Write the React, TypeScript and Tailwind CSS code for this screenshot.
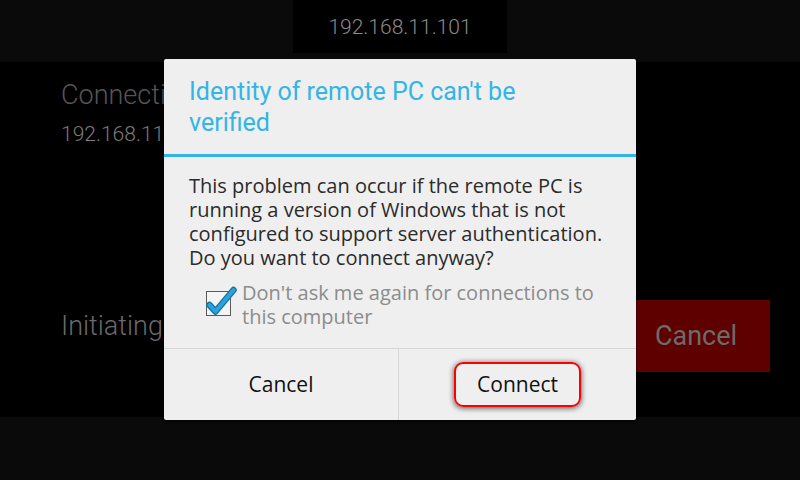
import React from 'react';

const CheckMark: React.FC = () => (
  <svg width="32" height="34" viewBox="0 0 32 34" className="absolute left-[-1px] top-[-8px]">
    <rect x="1.5" y="8.5" width="24" height="24" fill="#f4f4f4" stroke="#5a5a5a" strokeWidth="1" />
    <path d="M4.5 22 L10.5 28.5 L28.5 7" fill="none" stroke="#17729f" strokeWidth="6.5" strokeLinecap="round" strokeLinejoin="round" />
    <path d="M4.5 22 L10.5 28.5 L28.5 7" fill="none" stroke="#2aa3dc" strokeWidth="4" strokeLinecap="round" strokeLinejoin="round" />
  </svg>
);

const App: React.FC = () => {
  return (
    <div className="relative w-[800px] h-[480px] overflow-hidden bg-black font-['Roboto',sans-serif]">
      {/* Top bar */}
      <div className="h-[62px] bg-[#0a0a0a] flex justify-center">
        <div className="w-[214px] h-[53px] bg-black flex items-center justify-center pt-[3px] text-[21px] font-light text-[#8a8a8a]">
          192.168.11.101
        </div>
      </div>

      {/* Background connecting screen */}
      <div className="h-[355px] bg-black pl-[61px] pr-[30px] flex flex-col font-light">
        <div className="pt-[15px] text-[27px] leading-[36px] text-[#555555]">Connecting to</div>
        <div className="mt-[7px] text-[21px] leading-[28px] text-[#7c7c7c]">192.168.11.101</div>
        <div className="mt-auto mb-[45px] flex items-start justify-between">
          <span className="pt-[8px] text-[27px] leading-[36px] text-[#6a6a6a]">Initiating connection...</span>
          <div className="w-[134px] h-[72px] bg-[#5f0000] flex items-center justify-center pr-[14px] text-[27px] font-normal text-[#6b6b6b]">
            Cancel
          </div>
        </div>
      </div>

      {/* Bottom bar */}
      <div className="h-[63px] bg-[#0a0a0a]" />

      {/* Dialog */}
      <div className="absolute left-[164px] top-[59px] w-[472px] h-[361px] bg-[#efefef] rounded-[2px] shadow-[0_2px_3px_rgba(0,0,0,0.6)] flex flex-col">
        <div className="h-[95px] shrink-0 pl-[25px] pt-[17px]">
          <div className="w-[350px] text-[25px] leading-[31px] text-[#33b5e5]">
            Identity of remote PC can't be verified
          </div>
        </div>
        <div className="h-[3px] shrink-0 bg-[#33b5e5]" />
        <div className="flex-1 min-h-0 pl-[25px] pr-[10px] pt-[17px] font-['Open_Sans',sans-serif]">
          <p className="text-[20px] leading-[24px] text-[#2b2b2b]">
            This problem can occur if the remote PC is running a version of Windows that is not configured to support server authentication. Do you want to connect anyway?
          </p>
          <div className="mt-[11px] pl-[17px] pr-[14px] flex gap-[12px]">
            <div className="relative w-[24px] h-[24px] mt-[10px] shrink-0">
              <CheckMark />
            </div>
            <span className="text-[20px] leading-[24px] text-[#8c8c8c]">
              Don't ask me again for connections to this computer
            </span>
          </div>
        </div>
        <div className="h-[72px] shrink-0 border-t border-[#d6d6d6] flex font-['Open_Sans',sans-serif] text-[21px] text-[#111111]">
          <div className="w-[235px] border-r border-[#d6d6d6] flex items-center justify-center">Cancel</div>
          <div className="flex-1 flex items-center justify-center">
            <div className="w-[127px] h-[45px] border-2 border-[#ff0000] rounded-[9px] shadow-[0_1px_5px_1px_rgba(0,0,0,0.5)] flex items-center justify-center">
              Connect
            </div>
          </div>
        </div>
      </div>
    </div>
  );
};

export default App;
